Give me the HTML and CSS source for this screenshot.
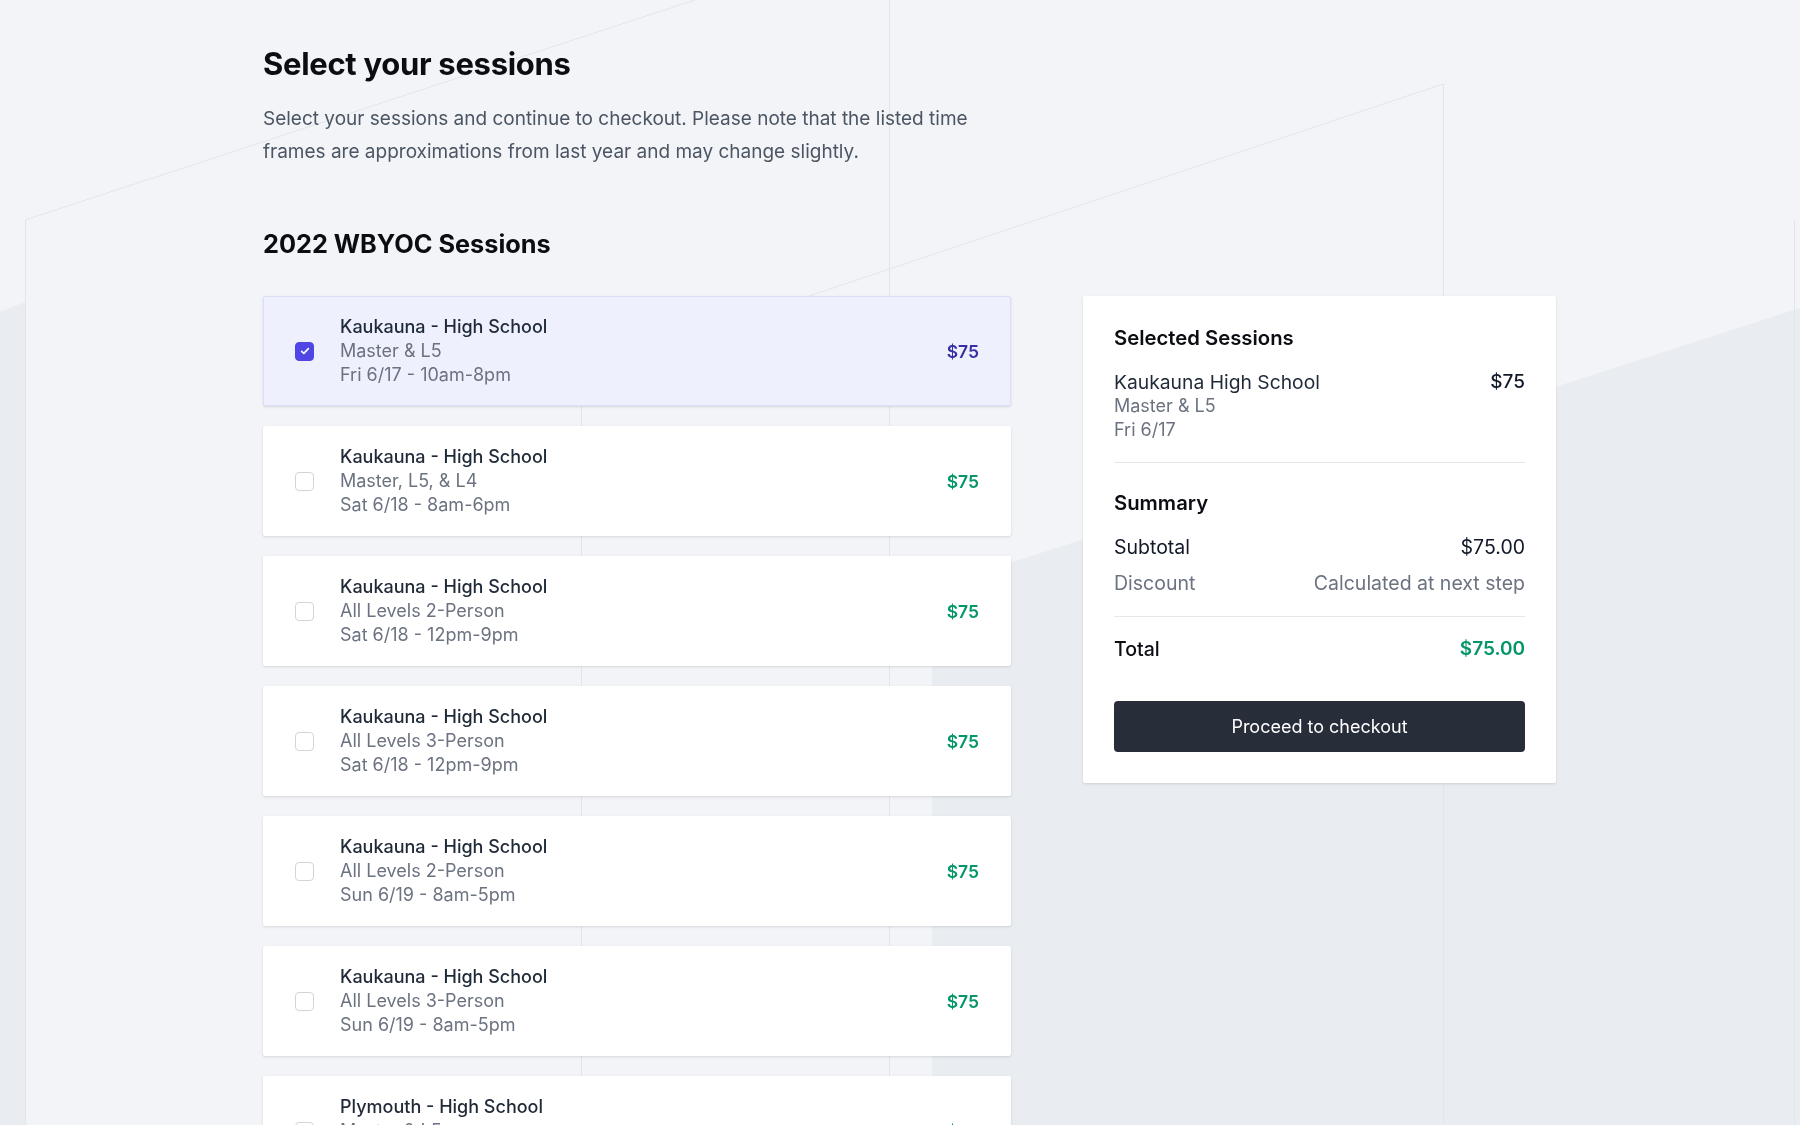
FILE: index.html
```html
<!DOCTYPE html>
<html lang="en">
<head>
<meta charset="utf-8">
<title>Select your sessions</title>
<link rel="stylesheet" href="styles.css">
</head>
<body>
<svg class="bg-decor" viewBox="0 0 1800 1125" preserveAspectRatio="none" aria-hidden="true">
  <polygon points="0,312 25,302 25,1125 0,1125" fill="#e9ecf0"/>
  <polygon points="932,588 1800,308 1800,1125 932,1125" fill="#e9ecf0"/>
  <line x1="25" y1="220" x2="695" y2="0" stroke="#e3e5e9" stroke-width="1"/>
  <line x1="25.5" y1="220" x2="25.5" y2="1125" stroke="#e3e5e9" stroke-width="1"/>
  <line x1="889.5" y1="0" x2="889.5" y2="1125" stroke="#e3e5e9" stroke-width="1"/>
  <line x1="581.5" y1="380" x2="581.5" y2="1125" stroke="#e3e5e9" stroke-width="1"/>
  <line x1="809" y1="296" x2="1443" y2="84" stroke="#e3e5e9" stroke-width="1"/>
  <line x1="1443.5" y1="84" x2="1443.5" y2="1125" stroke="#e1e4e8" stroke-width="1"/>
  <line x1="1794.5" y1="220" x2="1794.5" y2="1125" stroke="#e1e4e8" stroke-width="1"/>
</svg>

<main class="page">
  <header class="intro">
    <h1 class="title">Select your sessions</h1>
    <p class="lead">Select your sessions and continue to checkout. Please note that the listed time frames are approximations from last year and may change slightly.</p>
    <h2 class="group-title">2022 WBYOC Sessions</h2>
  </header>

  <div class="layout">
    <ul class="sessions">
      <li class="session is-selected">
        <span class="checkbox is-checked">
          <svg viewBox="0 0 16 16" width="12" height="12"><path d="M3.5 8.4l3 2.8 6-6.4" fill="none" stroke="#fff" stroke-width="2.2" stroke-linecap="round" stroke-linejoin="round"/></svg>
        </span>
        <div class="session-info">
          <div class="session-name">Kaukauna - High School</div>
          <div class="session-meta">Master &amp; L5</div>
          <div class="session-meta">Fri 6/17 - 10am-8pm</div>
        </div>
        <div class="session-price">$75</div>
      </li>
      <li class="session">
        <span class="checkbox"></span>
        <div class="session-info">
          <div class="session-name">Kaukauna - High School</div>
          <div class="session-meta">Master, L5, &amp; L4</div>
          <div class="session-meta">Sat 6/18 - 8am-6pm</div>
        </div>
        <div class="session-price">$75</div>
      </li>
      <li class="session">
        <span class="checkbox"></span>
        <div class="session-info">
          <div class="session-name">Kaukauna - High School</div>
          <div class="session-meta">All Levels 2-Person</div>
          <div class="session-meta">Sat 6/18 - 12pm-9pm</div>
        </div>
        <div class="session-price">$75</div>
      </li>
      <li class="session">
        <span class="checkbox"></span>
        <div class="session-info">
          <div class="session-name">Kaukauna - High School</div>
          <div class="session-meta">All Levels 3-Person</div>
          <div class="session-meta">Sat 6/18 - 12pm-9pm</div>
        </div>
        <div class="session-price">$75</div>
      </li>
      <li class="session">
        <span class="checkbox"></span>
        <div class="session-info">
          <div class="session-name">Kaukauna - High School</div>
          <div class="session-meta">All Levels 2-Person</div>
          <div class="session-meta">Sun 6/19 - 8am-5pm</div>
        </div>
        <div class="session-price">$75</div>
      </li>
      <li class="session">
        <span class="checkbox"></span>
        <div class="session-info">
          <div class="session-name">Kaukauna - High School</div>
          <div class="session-meta">All Levels 3-Person</div>
          <div class="session-meta">Sun 6/19 - 8am-5pm</div>
        </div>
        <div class="session-price">$75</div>
      </li>
      <li class="session">
        <span class="checkbox"></span>
        <div class="session-info">
          <div class="session-name">Plymouth - High School</div>
          <div class="session-meta">Master &amp; L5</div>
          <div class="session-meta">Fri 6/24 - 10am-8pm</div>
        </div>
        <div class="session-price">$75</div>
      </li>
    </ul>

    <aside class="summary">
      <h3 class="summary-title">Selected Sessions</h3>
      <div class="selected-item">
        <div class="selected-info">
          <div class="selected-name">Kaukauna High School</div>
          <div class="selected-meta">Master &amp; L5</div>
          <div class="selected-meta">Fri 6/17</div>
        </div>
        <div class="selected-price">$75</div>
      </div>
      <hr class="divider">
      <h3 class="summary-title summary-title--second">Summary</h3>
      <div class="row row-subtotal"><span>Subtotal</span><span>$75.00</span></div>
      <div class="row row-muted"><span>Discount</span><span>Calculated at next step</span></div>
      <hr class="divider divider--total">
      <div class="row row-total"><span>Total</span><span class="total-amount">$75.00</span></div>
      <button class="checkout" type="button">Proceed to checkout</button>
    </aside>
  </div>
</main>
</body>
</html>
```

FILE: styles.css
```css
* { box-sizing: border-box; }

html, body {
  margin: 0;
  padding: 0;
}

body {
  background: #f3f4f7;
  font-family: Inter, "Noto Sans", "Liberation Sans", sans-serif;
  color: #111827;
  overflow: hidden;
  height: 1125px;
}

.bg-decor {
  position: fixed;
  left: 0;
  top: 0;
  width: 1800px;
  height: 1125px;
  z-index: 0;
}

.page {
  position: relative;
  z-index: 1;
  padding: 46px 0 0 263px;
}

.intro {
  width: 748px;
}

.title {
  margin: 0;
  font-size: 31px;
  line-height: 36px;
  font-weight: 700;
  color: #0b0d12;
  letter-spacing: -0.3px;
}

.lead {
  margin: 20px 0 0;
  font-size: 19px;
  line-height: 33px;
  color: #4b5563;
}

.group-title {
  margin: 60px 0 0;
  font-size: 25.3px;
  line-height: 32px;
  font-weight: 700;
  color: #0b0d12;
}

.layout {
  display: grid;
  grid-template-columns: 748px 473px;
  column-gap: 72px;
  align-items: start;
  margin-top: 36px;
}

.sessions {
  list-style: none;
  margin: 0;
  padding: 0;
  display: flex;
  flex-direction: column;
  gap: 20px;
}

.session {
  display: flex;
  align-items: center;
  padding: 18px 31px 18px 31px;
  background: #ffffff;
  border: 1px solid #ffffff;
  border-radius: 2px;
  box-shadow: 0 1px 3px rgba(17, 24, 39, 0.10), 0 1px 2px rgba(17, 24, 39, 0.04);
}

.session.is-selected {
  background: #eff0fd;
  border-color: #dcdffb;
}

.checkbox {
  flex: none;
  width: 19px;
  height: 19px;
  border: 1px solid #d1d5db;
  border-radius: 4px;
  background: #fff;
  display: flex;
  align-items: center;
  justify-content: center;
}

.checkbox.is-checked {
  background: #4f46e5;
  border-color: #4f46e5;
}

.session-info {
  flex: 1;
  margin-left: 26px;
}

.session-name {
  font-size: 18px;
  line-height: 24px;
  font-weight: 500;
  color: #1f2937;
}

.session-meta {
  font-size: 18px;
  line-height: 24px;
  color: #6b7280;
}

.session-price {
  font-size: 17.5px;
  font-weight: 600;
  color: #059669;
}

.is-selected .session-price {
  color: #3730a3;
}

.summary {
  background: #ffffff;
  border-radius: 2px;
  padding: 28px 31px 31px;
  box-shadow: 0 1px 3px rgba(17, 24, 39, 0.10), 0 1px 2px rgba(17, 24, 39, 0.04);
}

.summary-title {
  margin: 0;
  font-size: 20.3px;
  line-height: 28px;
  font-weight: 600;
  color: #0b0d12;
}

.summary-title--second {
  margin-top: 26px;
}

.selected-item {
  display: flex;
  justify-content: space-between;
  align-items: flex-start;
  margin-top: 18px;
  padding-bottom: 20px;
}

.selected-name {
  font-size: 19.3px;
  line-height: 24px;
  color: #1f2937;
}

.selected-meta {
  font-size: 18px;
  line-height: 24px;
  color: #6b7280;
}

.selected-price {
  font-size: 19px;
  line-height: 24px;
  font-weight: 500;
  color: #111827;
}

.divider {
  margin: 0;
  border: 0;
  border-top: 1px solid #e5e7eb;
}

.row {
  display: flex;
  justify-content: space-between;
  font-size: 19.5px;
  line-height: 24px;
}

.row-subtotal {
  margin-top: 18px;
  color: #111827;
}

.row-muted {
  margin-top: 12px;
  color: #6b7280;
}

.divider--total {
  margin-top: 21px;
}

.row-total {
  margin-top: 20px;
  font-weight: 500;
  color: #0b0d12;
}

.total-amount {
  color: #059669;
  font-size: 19px;
  font-weight: 600;
}

.checkout {
  display: block;
  width: 100%;
  margin-top: 40px;
  height: 51px;
  border: 0;
  border-radius: 4px;
  background: #282d3a;
  color: #ffffff;
  font-family: inherit;
  font-size: 18px;
  font-weight: 400;
  cursor: pointer;
}
```
